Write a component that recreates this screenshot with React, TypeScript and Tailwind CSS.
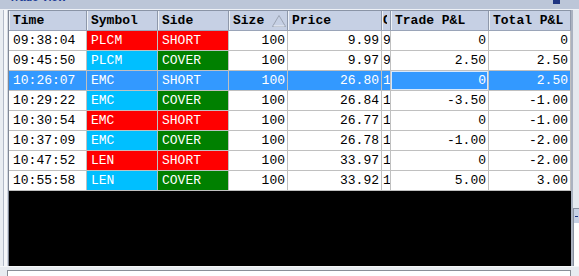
import React from "react";

type Row = {
  time: string;
  symbol: string;
  side: string;
  size: string;
  price: string;
  cost: string;
  trade: string;
  total: string;
  symColor: "red" | "cyan";
  selected?: boolean;
};

const rows: Row[] = [
  { time: "09:38:04", symbol: "PLCM", side: "SHORT", size: "100", price: "9.99", cost: "999", trade: "0", total: "0", symColor: "red" },
  { time: "09:45:50", symbol: "PLCM", side: "COVER", size: "100", price: "9.97", cost: "997", trade: "2.50", total: "2.50", symColor: "cyan" },
  { time: "10:26:07", symbol: "EMC", side: "SHORT", size: "100", price: "26.80", cost: "1", trade: "0", total: "2.50", symColor: "cyan", selected: true },
  { time: "10:29:22", symbol: "EMC", side: "COVER", size: "100", price: "26.84", cost: "1", trade: "-3.50", total: "-1.00", symColor: "cyan" },
  { time: "10:30:54", symbol: "EMC", side: "SHORT", size: "100", price: "26.77", cost: "1", trade: "0", total: "-1.00", symColor: "red" },
  { time: "10:37:09", symbol: "EMC", side: "COVER", size: "100", price: "26.78", cost: "1", trade: "-1.00", total: "-2.00", symColor: "cyan" },
  { time: "10:47:52", symbol: "LEN", side: "SHORT", size: "100", price: "33.97", cost: "1", trade: "0", total: "-2.00", symColor: "red" },
  { time: "10:55:58", symbol: "LEN", side: "COVER", size: "100", price: "33.92", cost: "1", trade: "5.00", total: "3.00", symColor: "cyan" },
];

function SortArrow() {
  return (
    <svg width="14" height="12" viewBox="0 0 14 12" className="shrink-0">
      <polygon points="7,0.5 13.5,11.5 0.5,11.5" fill="none" stroke="#9aa3b2" strokeWidth="1" />
      <line x1="1.5" y1="11" x2="12.5" y2="11" stroke="#eef1f6" strokeWidth="1" />
    </svg>
  );
}

function HeaderCell({ w, children }: { w: string; children: React.ReactNode }) {
  return (
    <div className={`${w} h-full flex items-center pl-[4px] overflow-hidden whitespace-nowrap border-r border-[#8e98aa] shadow-[inset_1px_0_0_#eef2f8]`}>
      {children}
    </div>
  );
}

function DataRow({ r }: { r: Row }) {
  const sel = r.selected;
  const base = "h-full flex items-center overflow-hidden whitespace-nowrap border-r border-[#c0c0c0]";
  const plain = sel ? "bg-[#3399ff] text-white" : "bg-white text-black";
  const symBg = sel ? "bg-[#3399ff]" : r.symColor === "red" ? "bg-[#ff0000]" : "bg-[#00bfff]";
  const sideBg = sel ? "bg-[#3399ff]" : r.side === "SHORT" ? "bg-[#ff0000]" : "bg-[#008000]";
  return (
    <div className="flex h-[20px] border-b border-[#c0c0c0]">
      <div className={`${base} ${plain} w-[78px] pl-[4px]`}>{r.time}</div>
      <div className={`${base} ${symBg} text-white w-[71px] pl-[4px]`}>{r.symbol}</div>
      <div className={`${base} ${sideBg} text-white w-[71px] pl-[4px]`}>{r.side}</div>
      <div className={`${base} ${plain} w-[59px] justify-end pr-[2px]`}>{r.size}</div>
      <div className={`${base} ${plain} w-[94px] justify-end pr-[2px]`}>{r.price}</div>
      <div className={`${base} ${plain} w-[9px] pl-[1px]`}>{r.cost}</div>
      <div className={`${base} ${plain} w-[98px] justify-end pr-[2px] ${sel ? "shadow-[inset_0_0_0_1px_#d6e8fc]" : ""}`}>
        {r.trade}
      </div>
      <div className={`${base} ${plain} w-[82px] justify-end pr-[2px]`}>{r.total}</div>
    </div>
  );
}

export default function App() {
  return (
    <div className="w-[579px] h-[276px] overflow-hidden flex flex-col bg-[#e4e8ee] font-['Liberation_Mono',monospace] text-[13px] leading-[19px]">
      {/* window title strip, mostly scrolled off */}
      <div className="h-[10px] shrink-0 flex justify-between bg-[#bcc6d8] overflow-hidden border-b border-[#eef1f6]">
        <span className="ml-[9px] -mt-[9px] font-['Liberation_Sans',sans-serif] font-bold text-[11px] leading-[12px] text-[#1e3d96]">
          Trade View
        </span>
        <span className="mr-[19px] w-[7px] h-[4px] bg-[#1e3480]" />
      </div>

      <div className="flex flex-1 min-h-0">
        {/* left frame */}
        <div className="w-[8px] flex shrink-0">
          <div className="w-[3px] bg-[#e9edf2]" />
          <div className="w-[1px] bg-[#b2bac8]" />
          <div className="w-[3px] bg-[#f5f7fa]" />
          <div className="w-[1px] bg-[#d2d8e1]" />
        </div>

        {/* table */}
        <div className="w-[563px] flex flex-col border-l border-[#7f8796] shrink-0">
          <div className="flex h-[21px] border-t border-b border-t-[#8a94a6] border-b-[#9aa4b8] bg-[#c6d0e4] font-bold text-black shrink-0">
            <HeaderCell w="w-[78px]">Time</HeaderCell>
            <HeaderCell w="w-[71px]">Symbol</HeaderCell>
            <HeaderCell w="w-[71px]">Side</HeaderCell>
            <div className="w-[59px] h-full flex items-center justify-between pl-[4px] pr-[1px] border-r border-[#8e98aa] shadow-[inset_1px_0_0_#eef2f8]">
              <span>Size</span>
              <SortArrow />
            </div>
            <HeaderCell w="w-[94px]">Price</HeaderCell>
            <div className="w-[9px] h-full flex items-center pl-[1px] overflow-hidden border-r border-[#8e98aa] shadow-[inset_1px_0_0_#eef2f8]">
              <span className="w-[4px] overflow-hidden">C</span>
            </div>
            <HeaderCell w="w-[98px]">Trade P&amp;L</HeaderCell>
            <HeaderCell w="w-[82px]">Total P&amp;L</HeaderCell>
          </div>
          {rows.map((r) => (
            <DataRow key={r.time} r={r} />
          ))}
          <div className="flex-1 bg-black" />
        </div>

        {/* right frame with neighbouring panel */}
        <div className="w-[8px] flex shrink-0">
          <div className="w-[2px] bg-[#aab2c0]" />
          <div className="w-[6px] flex flex-col">
            <div className="h-[198px] bg-[#e4e8ee]" />
            <div className="flex-1 flex flex-col border-l border-t border-[#8a92a0] bg-white">
              <div className="h-[14px] bg-[#c6d0e4] flex items-center pl-[1px]">
                <span className="w-[3px] h-[1px] bg-[#1e3480]" />
              </div>
            </div>
          </div>
        </div>
      </div>

      {/* bottom strip: top of next panel */}
      <div className="h-[10px] shrink-0 flex flex-col bg-[#e8ecf1] border-t border-[#f6f8fa]">
        <div className="h-[3px]" />
        <div className="flex-1 ml-[7px] mr-[8px] border-t border-l border-r border-[#8a8f98] bg-white" />
      </div>
    </div>
  );
}
